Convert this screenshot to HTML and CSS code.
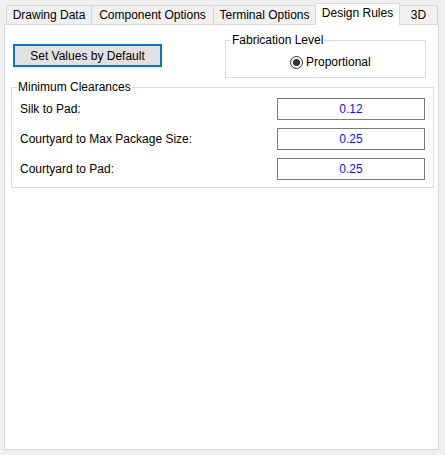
FILE: index.html
```html
<!DOCTYPE html>
<html>
<head>
<meta charset="utf-8">
<link rel="stylesheet" href="styles.css">
</head>
<body>
<div class="window">
  <div class="tabs">
    <div class="tab tab-drawing">Drawing Data</div>
    <div class="tab tab-component">Component Options</div>
    <div class="tab tab-terminal">Terminal Options</div>
    <div class="tab tab-active tab-design">Design Rules</div>
    <div class="tab tab-last tab-3d">3D</div>
  </div>
  <div class="panel">
    <div class="top-row">
      <button class="btn-default">Set Values by Default</button>
      <fieldset class="group group-fab">
        <legend>Fabrication Level</legend>
        <div class="radio-row">
          <span class="radio"><span class="radio-dot"></span></span>
          <span class="radio-label">Proportional</span>
        </div>
      </fieldset>
    </div>
    <fieldset class="group group-clear">
      <legend>Minimum Clearances</legend>
      <div class="field-row">
        <span class="field-label">Silk to Pad:</span>
        <div class="field-input">0.12</div>
      </div>
      <div class="field-row">
        <span class="field-label">Courtyard to Max Package Size:</span>
        <div class="field-input">0.25</div>
      </div>
      <div class="field-row">
        <span class="field-label">Courtyard to Pad:</span>
        <div class="field-input">0.25</div>
      </div>
    </fieldset>
  </div>
</div>
</body>
</html>
```

FILE: styles.css
```css
* { box-sizing: border-box; }
html, body {
  margin: 0;
  padding: 0;
  background: #f0f0f0;
  font-family: "Liberation Sans", Arial, sans-serif;
  font-size: 12px;
  color: #000;
}
.window {
  width: 445px;
  height: 455px;
}
.tabs {
  display: flex;
  align-items: flex-end;
  height: 24px;
  padding-left: 6px;
}
.tab {
  height: 19px;
  line-height: 18px;
  text-align: center;
  background: #f0f0f0;
  border-top: 1px solid #d9d9d9;
  border-left: 1px solid #d9d9d9;
  white-space: nowrap;
}
.tab-drawing { width: 85px; }
.tab-component { width: 122px; }
.tab-terminal { width: 102px; }
.tab-active {
  position: relative;
  z-index: 2;
  height: 22px;
  line-height: 18px;
  margin-bottom: -1px;
  background: #fff;
  border-right: 1px solid #d9d9d9;
  width: 85px;
}
.tab-last {
  border-left: none;
  border-right: 1px solid #d9d9d9;
  width: 38px;
}
.panel {
  margin: 0 6px 0 4px;
  height: 426px;
  background: #fff;
  border: 1px solid #d9d9d9;
}
.top-row {
  display: flex;
  align-items: flex-start;
  justify-content: space-between;
  margin: 7px 12px 0 8px;
}
.btn-default {
  margin-top: 12px;
  width: 149px;
  height: 23px;
  padding: 0;
  background: #e1e1e1;
  border: 2px solid #0078d7;
  font-family: inherit;
  font-size: 12px;
  color: #000;
}
.group {
  margin: 0;
  padding: 0;
  border: 1px solid #dcdcdc;
  min-width: 0;
}
.group legend {
  padding: 0 1px;
  margin-left: 5px;
  line-height: 16px;
}
.group-fab {
  width: 201px;
  height: 46px;
}
.radio-row {
  display: flex;
  align-items: center;
  padding-left: 64px;
  margin-top: 6px;
  height: 16px;
}
.radio {
  width: 13px;
  height: 13px;
  border: 1px solid #333;
  border-radius: 50%;
  display: flex;
  align-items: center;
  justify-content: center;
  background: #fff;
  margin-right: 3px;
}
.radio-dot {
  width: 7px;
  height: 7px;
  border-radius: 50%;
  background: #333;
}
.group-clear {
  margin: 1px 4px 0 6px;
  height: 109px;
  padding: 3px 8px 0 8px;
}
.group-clear legend {
  margin-left: -3px;
}
.field-row {
  display: flex;
  align-items: center;
  justify-content: space-between;
  height: 22px;
  margin-bottom: 8px;
}
.field-input {
  width: 148px;
  height: 22px;
  border: 1px solid #7a7a7a;
  text-align: center;
  line-height: 20px;
  color: #1010ff;
}
```
